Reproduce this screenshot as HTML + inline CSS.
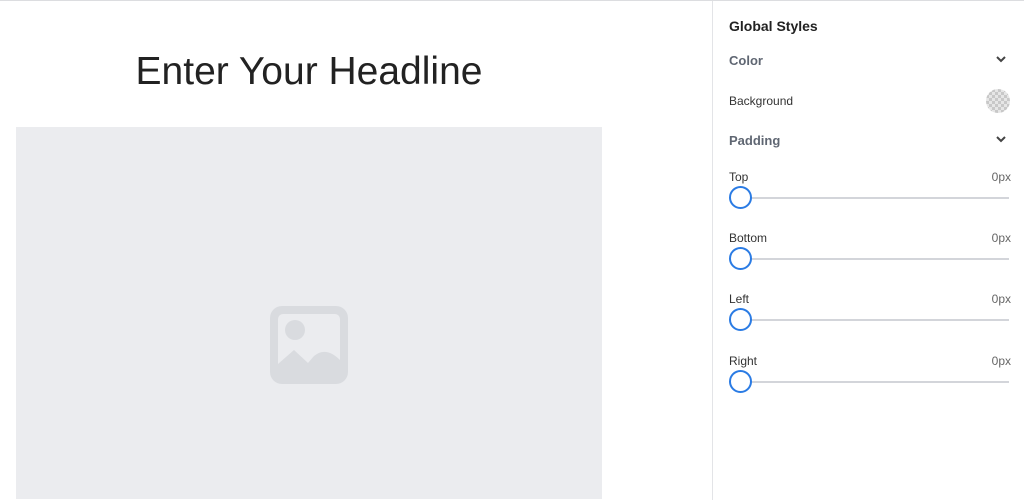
<!DOCTYPE html>
<html><head><style>
body{margin:0;width:1024px;height:500px;background:#fff;font-family:"Liberation Sans",sans-serif;position:relative;overflow:hidden}
.top{position:absolute;left:0;top:0;width:1024px;height:1px;background:#dcdde0}
h1{position:absolute;left:0;width:618px;top:50px;margin:0;text-align:center;font-weight:400;font-size:39px;color:#222;}
.img{position:absolute;left:16px;top:127px;width:586px;height:372px;background:#ebecef}
.panel{position:absolute;left:712px;top:1px;width:312px;height:499px;border-left:1px solid #e3e4e7}
.t{position:absolute;left:16px;font-size:13px}
.b{font-weight:700;color:#5f6672;}
.chev{position:absolute;left:283px}
.val{position:absolute;right:14px;font-size:12px;color:#666}
.track{position:absolute;left:16px;width:280px;height:2px;background:#d3d5da}
.knob{position:absolute;left:16px;width:23px;height:23px;border:2px solid #2a7be4;border-radius:50%;background:#fff;box-sizing:border-box}
</style></head><body>
<div class="top"></div>
<h1>Enter Your Headline</h1>
<div class="img">
<svg style="position:absolute;left:254px;top:179px" width="78" height="78" viewBox="0 0 78 78">
<rect x="0" y="0" width="78" height="78" rx="12" fill="#d9dbdf"/>
<rect x="8" y="8" width="62" height="62" rx="5" fill="#ebecef"/>
<circle cx="25" cy="24" r="10" fill="#d9dbdf"/>
<path d="M8 58 L24 44 L38 57 L44 50 Q56 40 70 54 L70 70 L8 70Z" fill="#d9dbdf"/>
</svg>
</div>
<div class="panel">
<div class="t" style="top:17px;font-weight:700;font-size:14px;color:#222">Global Styles</div>
<div class="t b" style="top:52px">Color</div>
<svg class="chev" style="top:54px" width="10" height="8"><path d="M1 2 L5 6 L9 2" stroke="#444" stroke-width="2" fill="none"/></svg>
<div class="t" style="top:93px;font-size:12px;color:#333">Background</div>
<svg style="position:absolute;left:273px;top:88px" width="24" height="24"><defs><pattern id="c" width="6" height="6" patternUnits="userSpaceOnUse"><rect width="6" height="6" fill="#e6e6e6"/><rect width="3" height="3" fill="#c8c8c8"/><rect x="3" y="3" width="3" height="3" fill="#c8c8c8"/></pattern></defs><circle cx="12" cy="12" r="12" fill="url(#c)"/></svg>
<div class="t b" style="top:132px">Padding</div>
<svg class="chev" style="top:134px" width="10" height="8"><path d="M1 2 L5 6 L9 2" stroke="#444" stroke-width="2" fill="none"/></svg>

<div class="t" style="top:169px;font-size:12px;color:#333">Top</div><div class="val" style="top:169px">0px</div>
<div class="track" style="top:196px"></div><div class="knob" style="top:185px"></div>
<div class="t" style="top:230px;font-size:12px;color:#333">Bottom</div><div class="val" style="top:230px">0px</div>
<div class="track" style="top:257px"></div><div class="knob" style="top:246px"></div>
<div class="t" style="top:291px;font-size:12px;color:#333">Left</div><div class="val" style="top:291px">0px</div>
<div class="track" style="top:318px"></div><div class="knob" style="top:307px"></div>
<div class="t" style="top:353px;font-size:12px;color:#333">Right</div><div class="val" style="top:353px">0px</div>
<div class="track" style="top:380px"></div><div class="knob" style="top:369px"></div>
</div>
</body></html>
